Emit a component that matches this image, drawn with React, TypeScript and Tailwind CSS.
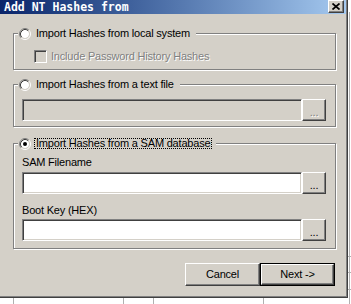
import React from "react";

const Radio = ({ checked }: { checked?: boolean }) => (
  <svg width="12" height="12" viewBox="0 0 12 12" className="shrink-0">
    <circle cx="6" cy="6" r="4" fill="#fff" />
    <path d="M2.11 9.89A5.5 5.5 0 0 1 9.89 2.11" fill="none" stroke="#808080" />
    <path d="M9.89 2.11A5.5 5.5 0 0 1 2.11 9.89" fill="none" stroke="#fff" />
    <path d="M2.82 9.18A4.5 4.5 0 0 1 9.18 2.82" fill="none" stroke="#404040" />
    <path d="M9.18 2.82A4.5 4.5 0 0 1 2.82 9.18" fill="none" stroke="#d4d0c8" />
    {checked && <circle cx="6" cy="6" r="2" fill="#000" />}
  </svg>
);

const sunken =
  "border border-t-[#808080] border-l-[#808080] border-r-white border-b-white shadow-[inset_1px_1px_0_#404040,inset_-1px_-1px_0_#d4d0c8]";
const raised =
  "border border-t-white border-l-white border-r-[#404040] border-b-[#404040] shadow-[inset_-1px_-1px_0_#808080]";

function Legend({ label, checked, focus }: { label: string; checked?: boolean; focus?: boolean }) {
  return (
    <div className="absolute left-[4px] top-[-7px] h-[13px] flex items-center bg-[#d4d0c8] pl-px pr-[4px]">
      <Radio checked={checked} />
      <span
        className={
          focus
            ? "ml-[3px] px-px h-[11px] leading-[9px] border border-dotted border-black"
            : "ml-[3px] px-px h-[11px] leading-[9px] border border-transparent"
        }
      >
        {label}
      </span>
    </div>
  );
}

function Browse({ disabled }: { disabled?: boolean }) {
  return (
    <div
      className={`w-[24px] h-[22px] ${raised} flex items-center justify-center pt-[4px] ${
        disabled ? "text-[#808080] [text-shadow:1px_1px_0_#fff]" : "text-black"
      }`}
    >
      ...
    </div>
  );
}

export default function App() {
  return (
    <div className="relative w-[351px] h-[304px] bg-white overflow-hidden font-['Liberation_Sans',Arial,sans-serif] text-[11px] tracking-[-0.2px] text-black">
      {/* background grid of the desktop behind */}
      <div className="absolute left-[349px] top-[12px] w-px h-[292px] bg-[#b0b0b0]" />
      <div className="absolute left-[348px] top-[256px] w-[3px] h-px bg-[#b0b0b0]" />
      <div className="absolute left-[348px] top-[272px] w-[3px] h-px bg-[#b0b0b0]" />
      <div className="absolute left-[348px] top-[289px] w-[3px] h-px bg-[#b0b0b0]" />
      <div className="absolute left-[13px] top-[298px] w-px h-[6px] bg-[#b0b0b0]" />
      <div className="absolute left-[123px] top-[298px] w-px h-[6px] bg-[#b0b0b0]" />
      <div className="absolute left-[153px] top-[298px] w-px h-[6px] bg-[#b0b0b0]" />
      <div className="absolute left-[263px] top-[298px] w-px h-[6px] bg-[#b0b0b0]" />

      <div className="relative w-[348px] h-[298px] bg-[#d4d0c8] border-r border-b border-[#404040] shadow-[inset_-1px_-1px_0_#808080] flex flex-col">
        {/* Title bar */}
        <div className="h-[14px] mr-px flex items-start justify-between bg-linear-to-r from-[#0a246a] to-[#a6caf0] pl-[4px] pr-[2px]">
          <span className="font-['DejaVu_Sans_Mono',monospace] font-bold text-[11.5px] leading-[14px] tracking-normal text-white">
            Add NT Hashes from
          </span>
          <div className={`w-[16px] h-[13px] bg-[#d4d0c8] ${raised} flex items-center justify-center`}>
            <svg width="8" height="7" viewBox="0 0 8 7">
              <path d="M0.5 0.5L7.5 6.5M7.5 0.5L0.5 6.5" stroke="#000" strokeWidth="1.7" />
            </svg>
          </div>
        </div>

        <div className="flex flex-col pl-[13px]">
          {/* Group 1 */}
          <div className="relative mt-[19px] w-[323px] h-[37px] border border-[#808080] shadow-[1px_1px_0_#fff,inset_1px_1px_0_#fff]">
            <Legend label="Import Hashes from local system" />
            <div className="mt-[14px] ml-[20px] flex items-center">
              <div className={`w-[13px] h-[13px] ${sunken} bg-[#d4d0c8]`} />
              <span className="ml-[4px] text-[#808080] [text-shadow:1px_1px_0_#fff]">
                Include Password History Hashes
              </span>
            </div>
          </div>

          {/* Group 2 */}
          <div className="relative mt-[14px] w-[323px] h-[43px] border border-[#808080] shadow-[1px_1px_0_#fff,inset_1px_1px_0_#fff]">
            <Legend label="Import Hashes from a text file" />
            <div className="mt-[14px] ml-[8px] flex">
              <div className={`w-[280px] h-[22px] ${sunken} bg-[#d4d0c8]`} />
              <Browse disabled />
            </div>
          </div>

          {/* Group 3 */}
          <div className="relative mt-[16px] w-[323px] h-[106px] border border-[#808080] shadow-[1px_1px_0_#fff,inset_1px_1px_0_#fff]">
            <Legend label="Import Hashes from a SAM database" checked focus />
            <div className="ml-[8px] flex flex-col">
              <div className="mt-[12px] leading-[13px]">SAM Filename</div>
              <div className="mt-[3px] flex">
                <div className={`w-[280px] h-[22px] ${sunken} bg-white`} />
                <Browse />
              </div>
              <div className="mt-[10px] leading-[13px]">Boot Key (HEX)</div>
              <div className="mt-[2px] flex">
                <div className={`w-[280px] h-[22px] ${sunken} bg-white`} />
                <Browse />
              </div>
            </div>
          </div>

          {/* Buttons */}
          <div className="mt-[14px] w-[322px] flex justify-end">
            <div className={`w-[75px] h-[23px] ${raised} flex items-center justify-center`}>Cancel</div>
            <div className="w-[75px] h-[23px] border border-black">
              <div className={`w-full h-full ${raised} flex items-center justify-center`}>Next -&gt;</div>
            </div>
          </div>
        </div>
      </div>
    </div>
  );
}
